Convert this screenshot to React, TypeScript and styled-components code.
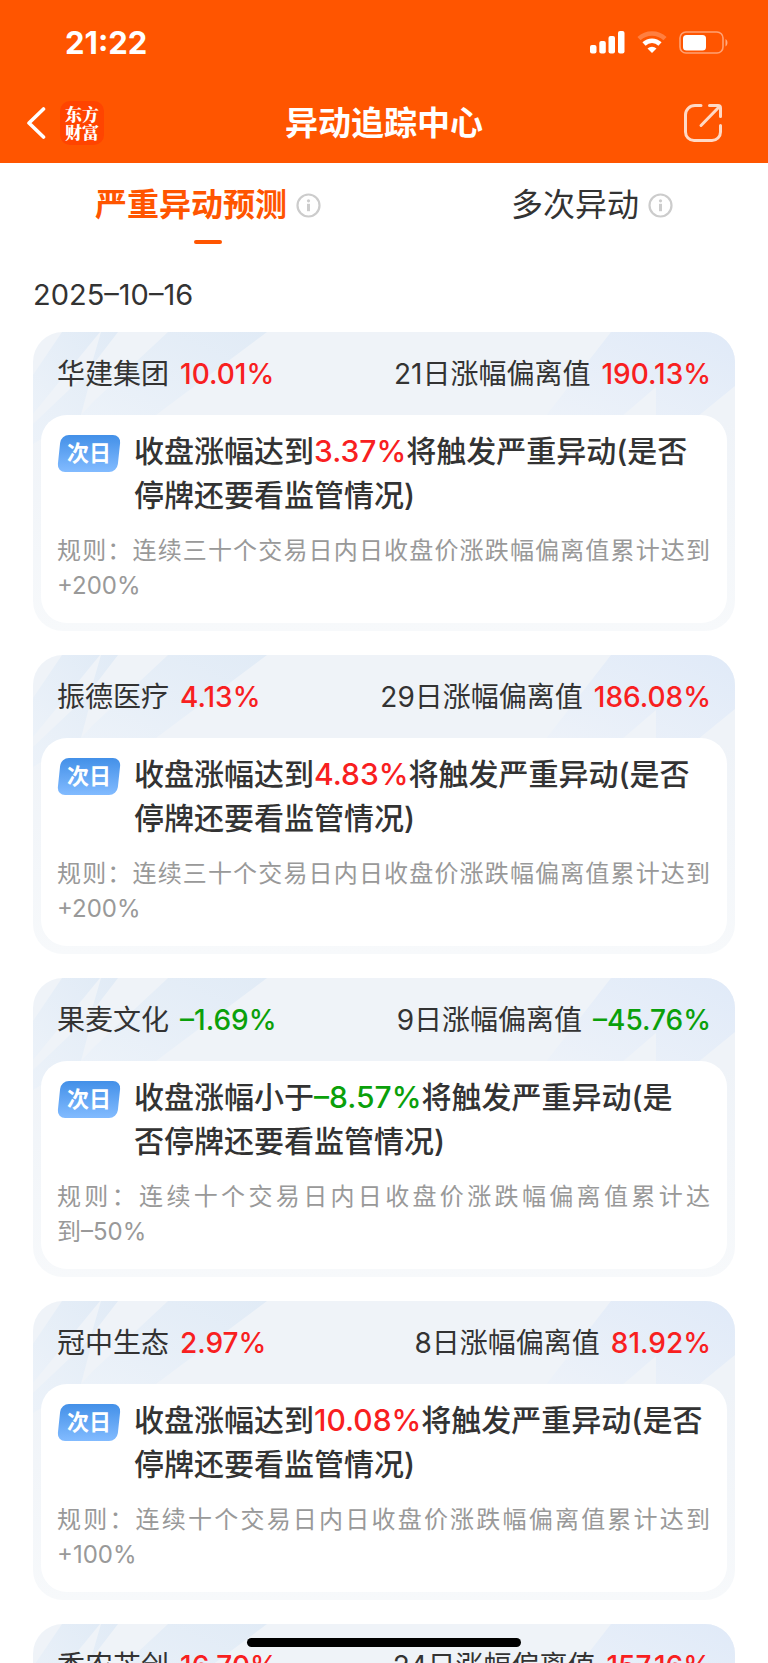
import React from "react";
import styled, { createGlobalStyle } from "styled-components";

const GlobalStyle = createGlobalStyle`
  *, *::before, *::after { box-sizing: border-box; }
  html, body { margin: 0; background: #fff; }
  body {
    font-family: Inter, "Noto Sans CJK SC", sans-serif;
    color: #333;
    -webkit-font-smoothing: antialiased;
  }
  button { font: inherit; color: inherit; background: none; border: 0; padding: 0; cursor: pointer; }
  h1, h2, p { margin: 0; font-weight: inherit; }
`;

const Screen = styled.div`
  position: relative;
  height: 100vh;
  overflow: hidden;
`;

const Header = styled.header`
  background: #ff5500;
  color: #fff;
`;

const StatusBar = styled.div`
  display: flex;
  align-items: center;
  justify-content: space-between;
  height: 84px;
  padding: 0 40px 0 65px;
`;

const Clock = styled.span`
  font-size: 31px;
  font-weight: 700;
`;

const StatusIcons = styled.div`
  display: flex;
  align-items: center;
  gap: 12px;
`;

const NavBar = styled.nav`
  display: grid;
  grid-template-columns: 1fr auto 1fr;
  align-items: center;
  height: 79px;
  padding: 0 26px 2px;
`;

const NavStart = styled.div`
  display: flex;
  align-items: center;
  gap: 14px;
`;

const IconButton = styled.button`
  display: flex;
`;

const ShareButton = styled(IconButton)`
  justify-self: end;
  margin-right: 19px;
`;

const Logo = styled.a`
  display: grid;
  place-content: center;
  width: 44px;
  height: 44px;
  border-radius: 10px;
  background: #ff4400;
  color: #fff;
  font-family: "Noto Serif CJK SC", "Noto Sans CJK SC", serif;
  font-size: 17px;
  font-weight: 900;
  line-height: 18px;
  text-align: center;
  text-decoration: none;
`;

const PageTitle = styled.h1`
  font-size: 33px;
  font-weight: 700;
  line-height: 40px;
`;

const Tabs = styled.div`
  display: flex;
  justify-content: space-around;
  height: 92px;
  padding-top: 18px;
`;

const Tab = styled.div<{ $active?: boolean }>`
  display: flex;
  flex-direction: column;
  align-items: center;
  gap: 11px;
  color: ${(p) => (p.$active ? "#ff5500" : "#333")};
  font-size: 32px;
  font-weight: ${(p) => (p.$active ? 700 : 400)};
  line-height: 48px;

  &::after {
    content: "";
    width: 28px;
    height: 4px;
    border-radius: 2px;
    background: ${(p) => (p.$active ? "#ff5500" : "transparent")};
  }
`;

const TabRow = styled.div`
  display: flex;
  align-items: center;
  gap: 9px;
`;

const Main = styled.main`
  padding: 0 33px;
`;

const DateLabel = styled.h2`
  padding: 20px 0 17px;
  font-size: 29px;
  line-height: 40px;
`;

const CardList = styled.div`
  display: flex;
  flex-direction: column;
  gap: 24px;
`;

const Card = styled.article`
  position: relative;
  padding: 0 8px 8px;
  border-radius: 30px;
  overflow: hidden;
  background: linear-gradient(#eff3f8 30%, #f7f9fb);
`;

const CardArt = styled.svg<{ $side: "left" | "right" }>`
  position: absolute;
  top: 0;
  ${(p) => p.$side}: 0;
`;

const CardHead = styled.div`
  position: relative;
  display: flex;
  align-items: center;
  justify-content: space-between;
  height: 83px;
  padding: 0 16px 4px;
  font-size: 28px;
`;

const Pair = styled.div`
  display: flex;
  align-items: baseline;
  gap: 11px;
`;

const Change = styled.span<{ $down: boolean }>`
  color: ${(p) => (p.$down ? "#0aa00a" : "#f8201f")};
  font-weight: 500;
  white-space: nowrap;
`;

const CardBody = styled.div`
  position: relative;
  padding: 14px 17px 20px 16px;
  border-radius: 26px;
  background: #fff;
`;

const Alert = styled.div`
  display: flex;
  align-items: flex-start;
  gap: 13px;
  margin-bottom: 16px;
`;

const Badge = styled.span`
  position: relative;
  flex: none;
  width: 64px;
  margin-top: 6px;
  color: #fff;
  font-size: 22px;
  font-weight: 700;
  line-height: 37px;
  text-align: center;
  z-index: 0;

  &::before {
    content: "";
    position: absolute;
    inset: 0 2px;
    z-index: -1;
    border-radius: 8px;
    background: linear-gradient(#4390e8, #82bbff);
    transform: skewX(-6deg);
  }
`;

const AlertText = styled.p`
  font-size: 30px;
  font-weight: 500;
  line-height: 44px;
`;

const Rule = styled.p`
  color: #999;
  font-size: 24px;
  line-height: 35px;
  text-align: justify;
`;

const NoBreak = styled.span`
  white-space: nowrap;
`;

const HomeIndicator = styled.div`
  position: absolute;
  bottom: 16px;
  left: 50%;
  width: 274px;
  height: 9px;
  border-radius: 5px;
  background: #000;
  transform: translateX(-50%);
`;

const InfoIcon = () => (
  <svg width="25" height="25" viewBox="0 0 25 25" fill="none" aria-hidden="true">
    <circle cx="12.5" cy="12.5" r="11" stroke="#ccc" strokeWidth="2.2" />
    <circle cx="12.5" cy="7.8" r="1.6" fill="#ccc" />
    <path d="M12.5 10.8v7.4" stroke="#ccc" strokeWidth="3" />
  </svg>
);

const LeftArt = () => (
  <CardArt $side="left" width="240" height="120" viewBox="0 0 240 120" aria-hidden="true">
    <defs>
      <linearGradient id="bandL" x1="0" y1="1" x2="1" y2="0">
        <stop offset="0" stopColor="#ecf2f9" />
        <stop offset="1" stopColor="#e1ebf6" />
      </linearGradient>
    </defs>
    <path d="M29 0H67L0 82V43Z" fill="url(#bandL)" />
    <path d="M68 0H85L62 30L48 83L0 112V92L57 38Z" fill="url(#bandL)" />
    <path d="M135 0H234L123 83H48L60 70Z" fill="url(#bandL)" />
  </CardArt>
);

const RightArt = () => (
  <CardArt $side="right" width="190" height="120" viewBox="0 0 190 120" aria-hidden="true">
    <defs>
      <linearGradient id="bandR" x1="0" y1="1" x2="1" y2="0">
        <stop offset="0" stopColor="#edf2f9" />
        <stop offset="1" stopColor="#e0eaf8" />
      </linearGradient>
    </defs>
    <path d="M66 0H190V54L152 85H111V55L76 85H0Z" fill="url(#bandR)" />
  </CardArt>
);

type Item = {
  name: string;
  change: string;
  days: number;
  deviation: string;
  verb: string;
  trigger: string;
  span: string;
  limit: string;
};

const items: Item[] = [
  { name: "华建集团", change: "10.01%", days: 21, deviation: "190.13%", verb: "达到", trigger: "3.37%", span: "三十", limit: "+200%" },
  { name: "振德医疗", change: "4.13%", days: 29, deviation: "186.08%", verb: "达到", trigger: "4.83%", span: "三十", limit: "+200%" },
  { name: "果麦文化", change: "–1.69%", days: 9, deviation: "–45.76%", verb: "小于", trigger: "–8.57%", span: "十", limit: "–50%" },
  { name: "冠中生态", change: "2.97%", days: 8, deviation: "81.92%", verb: "达到", trigger: "10.08%", span: "十", limit: "+100%" },
  { name: "香农芯创", change: "16.70%", days: 24, deviation: "157.16%", verb: "达到", trigger: "8.66%", span: "三十", limit: "+200%" },
];

const isDown = (value: string) => value.startsWith("–");

const Percent = ({ value }: { value: string }) => <Change $down={isDown(value)}>{value}</Change>;

const StockCard = ({ item }: { item: Item }) => (
  <Card>
    <LeftArt />
    <RightArt />
    <CardHead>
      <Pair>
        <span>{item.name}</span>
        <Percent value={item.change} />
      </Pair>
      <Pair>
        <span>{`${item.days}日涨幅偏离值`}</span>
        <Percent value={item.deviation} />
      </Pair>
    </CardHead>
    <CardBody>
      <Alert>
        <Badge>次日</Badge>
        <AlertText>
          {`收盘涨幅${item.verb}`}
          <Percent value={item.trigger} />
          {isDown(item.trigger) ? (
            <>
              将触发严重异动(是<NoBreak>否停牌</NoBreak>还要看监管情况)
            </>
          ) : (
            "将触发严重异动(是否停牌还要看监管情况)"
          )}
        </AlertText>
      </Alert>
      {isDown(item.limit) ? (
        <Rule>
          {`规则：连续${item.span}个交易日内日收盘价涨跌幅偏离值累计达`}
          <NoBreak>{`到${item.limit}`}</NoBreak>
        </Rule>
      ) : (
        <Rule>{`规则：连续${item.span}个交易日内日收盘价涨跌幅偏离值累计达到${item.limit}`}</Rule>
      )}
    </CardBody>
  </Card>
);

export default function App() {
  return (
    <Screen>
      <GlobalStyle />
      <Header>
        <StatusBar>
          <Clock>21:22</Clock>
          <StatusIcons>
            <svg width="35" height="23" viewBox="0 0 35 23" fill="#fff" aria-hidden="true">
              <rect x="0" y="14" width="6.5" height="8.5" rx="2" />
              <rect x="9.3" y="10" width="6.5" height="12.5" rx="2" />
              <rect x="18.5" y="5" width="6.5" height="17.5" rx="2" />
              <rect x="28" y="0" width="6.5" height="22.5" rx="2" />
            </svg>
            <svg width="30" height="23" viewBox="0 0 30 23" fill="none" aria-hidden="true">
              <path d="M2 7.6a19 19 0 0 1 26 0" stroke="#fff" strokeOpacity=".25" strokeWidth="4.6" />
              <path d="M7 13a11.6 11.6 0 0 1 16 0" stroke="#fff" strokeWidth="4.6" />
              <path d="M15 22l-4.5-4.6a6.6 6.6 0 0 1 9 0Z" fill="#fff" />
            </svg>
            <svg width="49" height="23" viewBox="0 0 49 23" fill="none" aria-hidden="true">
              <rect x="1" y="1" width="43" height="21" rx="6" stroke="#fff" strokeOpacity=".45" strokeWidth="1.6" />
              <rect x="4" y="4" width="23" height="15.5" rx="3.5" fill="#fff" />
              <path d="M46.5 8c2.6 1.4 2.6 6 0 7.4Z" fill="#fff" fillOpacity=".5" />
            </svg>
          </StatusIcons>
        </StatusBar>
        <NavBar>
          <NavStart>
            <IconButton aria-label="返回">
              <svg width="20" height="34" viewBox="0 0 20 34" fill="none" aria-hidden="true">
                <path d="M17.5 3L3 17l14.5 14" stroke="#fff" strokeWidth="3.6" strokeLinecap="round" strokeLinejoin="round" />
              </svg>
            </IconButton>
            <Logo href="#">
              东方
              <br />
              财富
            </Logo>
          </NavStart>
          <PageTitle>异动追踪中心</PageTitle>
          <ShareButton aria-label="分享">
            <svg width="40" height="40" viewBox="0 0 40 40" fill="none" stroke="#ffd9c5" strokeWidth="3" strokeLinecap="round" strokeLinejoin="round" aria-hidden="true">
              <path d="M18 2.5H12A9.5 9.5 0 0 0 2.5 12v17A8.5 8.5 0 0 0 11 37.5h18a8.5 8.5 0 0 0 8.5-8.5V22.500" />
              <path d="M26.5 2.5h8.5a2.5 2.5 0 0 1 2.5 2.5V13.500M36.5 3.5L18 22.500" />
            </svg>
          </ShareButton>
        </NavBar>
      </Header>
      <Tabs>
        <Tab $active>
          <TabRow>
            <button>严重异动预测</button>
            <IconButton aria-label="严重异动预测说明"><InfoIcon /></IconButton>
          </TabRow>
        </Tab>
        <Tab>
          <TabRow>
            <button>多次异动</button>
            <IconButton aria-label="多次异动说明"><InfoIcon /></IconButton>
          </TabRow>
        </Tab>
      </Tabs>
      <Main>
        <DateLabel>2025–10–16</DateLabel>
        <CardList>
          {items.map((item) => (
            <StockCard key={item.name} item={item} />
          ))}
        </CardList>
      </Main>
      <HomeIndicator />
    </Screen>
  );
}
